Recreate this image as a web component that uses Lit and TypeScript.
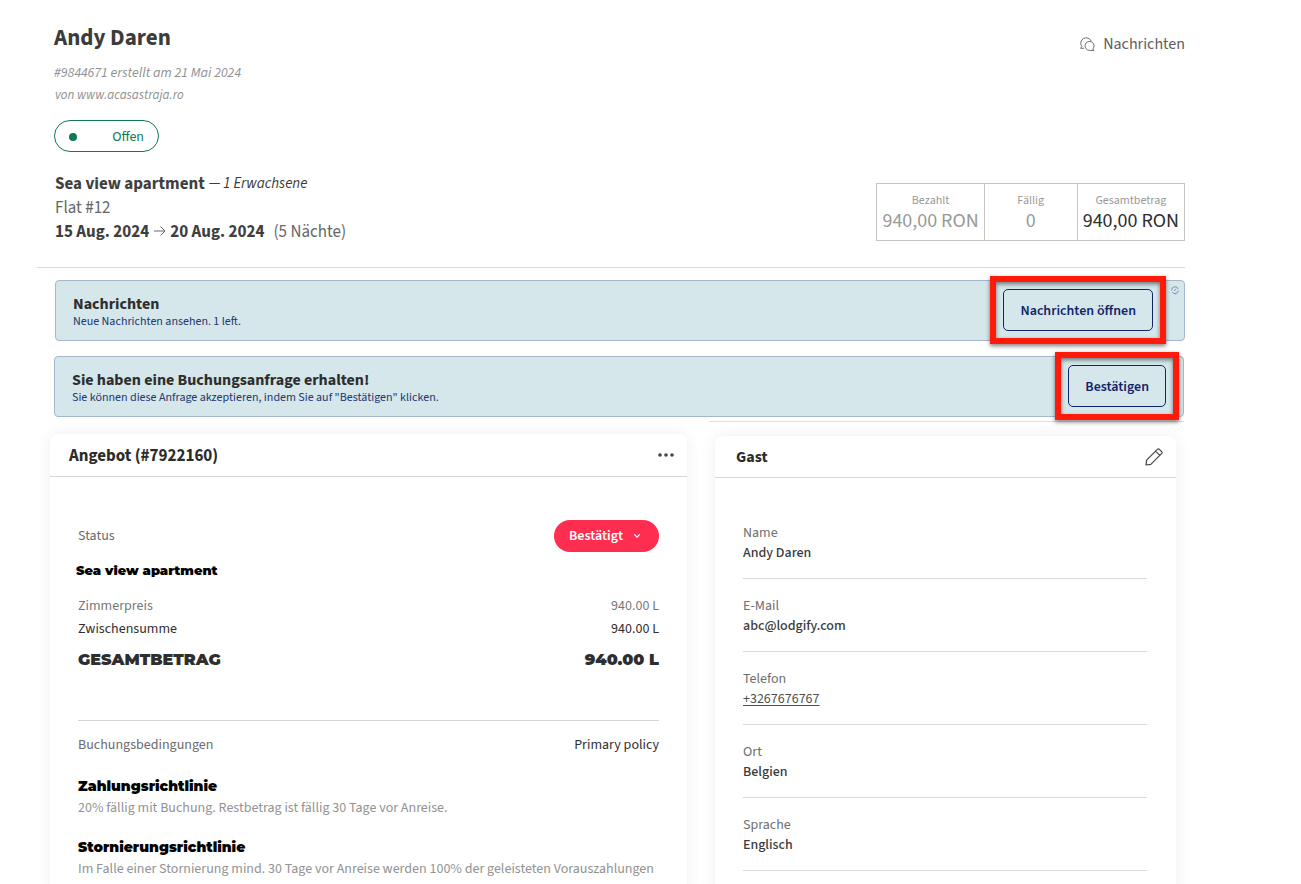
import { LitElement, html, css, svg } from "lit";
import { customElement } from "lit/decorators.js";

const chatIcon = svg`
  <path d="M0.6 11.3 L1.8 9.6 A5.5 5.5 0 1 1 11.2 4" />
  <path d="M0.6 11.3 H4" />
  <path d="M14 13.4 L12.9 11.9 A4.5 4.5 0 1 0 9.6 13.4 Z" />
`;

const guestFields = [
  { label: "Name", value: "Andy Daren" },
  { label: "E-Mail", value: "abc@lodgify.com" },
  { label: "Telefon", value: "+3267676767", href: "tel:+3267676767" },
  { label: "Ort", value: "Belgien" },
  { label: "Sprache", value: "Englisch" },
];

const totals = [
  { label: "Bezahlt", value: "940,00 RON", tone: "muted" },
  { label: "Fällig", value: "0", tone: "muted" },
  { label: "Gesamtbetrag", value: "940,00 RON", tone: "strong" },
];

@customElement("app-root")
export class AppRoot extends LitElement {
  static styles = css`
    :host {
      display: flex;
      flex-direction: column;
      box-sizing: border-box;
      min-height: 100vh;
      padding: 23px 116px 0 37px;
      overflow: hidden;
      background: #fff;
      color: #333;
      font-family: "Source Sans 3", "Source Sans Pro", "Noto Sans CJK SC", sans-serif;
      font-size: 14px;
      line-height: 20px;
    }
    * { box-sizing: border-box; }
    h1, h2, h3, p, dl, dd { margin: 0; }
    button, select { font: inherit; cursor: pointer; }
    svg { display: block; fill: none; stroke: currentColor; }

    .top {
      display: flex;
      justify-content: space-between;
      padding: 0 0 23px 17px;
      border-bottom: 1px solid #d8d8d8;
    }
    h1 { font-size: 23px; line-height: 30px; font-weight: 700; color: #3c3c3c; }
    .meta { margin-top: 9px; line-height: 22px; font-style: italic; color: #919191; }
    .source { font-size: 13px; padding-left: 1px; }
    .state {
      display: flex;
      align-items: center;
      justify-content: space-between;
      width: 105px;
      height: 32px;
      margin: 14px 0 20px;
      padding: 1px 14px 0;
      border: 1px solid #0f7a52;
      border-radius: 16px;
      color: #0f7a52;
    }
    .dot { width: 8px; height: 8px; border-radius: 50%; background: #0f7a52; }
    .stay { font-size: 17px; color: #666; padding-left: 1px; }
    .stay p { display: flex; align-items: center; gap: 4px; height: 24px; }
    .stay strong { font-weight: 700; color: #3f3f3f; }
    .stay em { font-size: 15px; color: #3a3a3a; }
    .nights { margin-left: 5px; }

    .side {
      display: flex;
      flex-direction: column;
      align-items: flex-end;
      justify-content: space-between;
      padding-top: 9px;
    }
    .messages {
      display: flex;
      align-items: center;
      gap: 8px;
      color: #5d5d5d;
      font-size: 16px;
      line-height: 24px;
      text-decoration: none;
    }
    .totals { display: flex; margin-bottom: 3px; border: 1px solid #c4c4c4; }
    .total {
      min-width: 93px;
      height: 56px;
      padding: 7px 5px 0;
      text-align: center;
      color: #999;
    }
    .total + .total { border-left: 1px solid #c4c4c4; }
    .total dt { font-size: 12px; line-height: 20px; }
    .total dd { font-size: 20px; line-height: 20px; }
    .total.strong dd { color: #2e2e2e; }

    .banner {
      position: relative;
      display: flex;
      align-items: center;
      justify-content: space-between;
      height: 61px;
      margin: 12px 0 0 18px;
      padding: 0 31px 0 17px;
      border: 1px solid #a5b7cd;
      border-radius: 4px;
      background: #d5e7ea;
    }
    .banner + .banner { margin: 15px 1px 0 17px; padding-right: 17px; }
    .note { padding-top: 2px; }
    .note h2 { font-size: 16px; line-height: 20px; color: #2e2e2e; }
    .note p { font-size: 12px; line-height: 15px; color: #24356f; }
    .banner button {
      position: relative;
      height: 42px;
      margin-bottom: 1px;
      padding: 1px 16px 0;
      border: 1px solid #10256a;
      border-radius: 5px;
      background: transparent;
      color: #10256a;
      font-weight: 600;
    }
    .banner button::after {
      content: "";
      position: absolute;
      inset: -14px;
      border: 6px solid #ff1a0a;
      filter: drop-shadow(0 2px 2px rgba(0, 0, 0, 0.5));
      pointer-events: none;
    }
    .corner { position: absolute; top: 5px; right: 5px; color: #7088a8; }

    .columns {
      flex: 1;
      display: grid;
      grid-template-columns: 637fr 461fr;
      gap: 28px;
      margin: 4px 9px 0 13px;
    }
    .column { display: flex; flex-direction: column; min-width: 0; }
    .rule { height: 1px; margin: 0 -8px 14px -6px; background: #dedede; }
    .card {
      flex: 1;
      border-radius: 8px 8px 0 0;
      background: #fff;
      box-shadow: 0 0 16px rgba(0, 0, 0, 0.07);
    }
    .offer { margin-top: 13px; }
    .head {
      display: flex;
      align-items: center;
      justify-content: space-between;
      height: 43px;
      padding: 0 13px 0 19px;
      border-bottom: 1px solid #d6d6d6;
    }
    .guest .head { height: 42px; padding: 0 13px 0 21px; }
    .head h2 { font-size: 16px; line-height: 24px; color: #2c2c2c; }
    .offer .head h2 { padding-top: 1px; font-size: 17px; }
    .icon { padding: 0; border: 0; background: none; color: #444; }
    .body { padding: 43px 28px 0; }
    .row { display: flex; align-items: center; justify-content: space-between; }
    .label { color: #6b6b6b; }
    .status { position: relative; color: #fff; }
    .status select {
      display: block;
      appearance: none;
      width: 105px;
      height: 32px;
      padding: 0 30px 0 15px;
      border: 0;
      border-radius: 16px;
      background: #ff2d4f;
      color: #fff;
      font-weight: 600;
    }
    .status svg { position: absolute; top: 12px; right: 18px; pointer-events: none; }
    h3 {
      font-family: Montserrat, Inter, sans-serif;
      font-size: 14px;
      line-height: 21px;
      font-weight: 900;
      color: #000;
    }
    .unit { margin: 8px 0 14px -2px; font-size: 13px; }
    .prices { line-height: 23px; padding-bottom: 49px; border-bottom: 1px solid #d4d4d4; }
    .price { display: flex; justify-content: space-between; color: #2e2e2e; }
    .price.light { color: #777; }
    .price.sum {
      margin-top: 7px;
      font-family: Montserrat, Inter, sans-serif;
      font-size: 16px;
      font-weight: 900;
    }
    .terms { padding: 14px 0 21px; color: #2e2e2e; }
    .policy { margin-bottom: 18px; }
    .policy p { line-height: 22px; color: #929292; }

    .fields { padding: 28px 29px 0 28px; }
    .field { padding: 17px 0 15px; border-bottom: 1px solid #d9dadc; }
    .field dt { color: #6f6f6f; }
    .field dd { font-weight: 500; color: #3a3a3a; }
    .field a { font-weight: 400; color: #4e4e4e; text-underline-offset: 2px; }
  `;

  render() {
    return html`
      <header class="top">
        <div>
          <h1>Andy Daren</h1>
          <div class="meta">
            <p>#9844671 erstellt am 21 Mai 2024</p>
            <p class="source">von www.acasastraja.ro</p>
          </div>
          <div class="state"><span class="dot"></span><span>Offen</span></div>
          <div class="stay">
            <p><strong>Sea view apartment</strong><em>— 1 Erwachsene</em></p>
            <p>Flat #12</p>
            <p>
              <strong>15 Aug. 2024</strong>
              <svg width="13" height="12" viewBox="0 0 13 12"><path d="M1 5 H12 M7.5 0.5 L12 5 L7.5 9.5" /></svg>
              <strong>20 Aug. 2024</strong>
              <span class="nights">(5 Nächte)</span>
            </p>
          </div>
        </div>
        <div class="side">
          <a class="messages" href="#messages">
            <svg width="15" height="14" viewBox="0 0 15 14" stroke-width="0.9">${chatIcon}</svg>
            Nachrichten
          </a>
          <dl class="totals">
            ${totals.map((t) => html`<div class="total ${t.tone}"><dt>${t.label}</dt><dd>${t.value}</dd></div>`)}
          </dl>
        </div>
      </header>

      <section class="banner">
        <div class="note">
          <h2>Nachrichten</h2>
          <p>Neue Nachrichten ansehen. 1 left.</p>
        </div>
        <button type="button">Nachrichten öffnen</button>
        <svg class="corner" width="8" height="9" viewBox="0 0 8 9" stroke-width="0.9">
          <path d="M0.6 4.4 A3.4 3.4 0 0 1 7.2 3 M7.4 4.6 A3.4 3.4 0 0 1 1.2 6 M3 5 L5.2 2.8 M3.6 7 L4.8 8.4" />
        </svg>
      </section>
      <section class="banner">
        <div class="note">
          <h2>Sie haben eine Buchungsanfrage erhalten!</h2>
          <p>Sie können diese Anfrage akzeptieren, indem Sie auf "Bestätigen" klicken.</p>
        </div>
        <button type="button">Bestätigen</button>
      </section>

      <main class="columns">
        <div class="column">
          <section class="card offer">
            <div class="head">
              <h2>Angebot (#7922160)</h2>
              <button class="icon" type="button" aria-label="Mehr">
                <svg width="16" height="4" viewBox="0 0 16 4">
                  <g fill="currentColor" stroke="none"><circle cx="2" cy="2" r="1.8" /><circle cx="8" cy="2" r="1.8" /><circle cx="14" cy="2" r="1.8" /></g>
                </svg>
              </button>
            </div>
            <div class="body">
              <div class="row">
                <label class="label" for="status">Status</label>
                <div class="status">
                  <select id="status"><option>Bestätigt</option></select>
                  <svg width="8" height="8" viewBox="0 0 8 8" stroke-width="1.3"><path d="M1.3 2.4 L4 5.1 L6.7 2.4" /></svg>
                </div>
              </div>
              <h3 class="unit">Sea view apartment</h3>
              <dl class="prices">
                <div class="price light"><dt>Zimmerpreis</dt><dd>940.00 L</dd></div>
                <div class="price"><dt>Zwischensumme</dt><dd>940.00 L</dd></div>
                <div class="price sum"><dt>GESAMTBETRAG</dt><dd>940.00 L</dd></div>
              </dl>
              <div class="row terms"><span class="label">Buchungsbedingungen</span><span>Primary policy</span></div>
              <div class="policy">
                <h3>Zahlungsrichtlinie</h3>
                <p>20% fällig mit Buchung. Restbetrag ist fällig 30 Tage vor Anreise.</p>
              </div>
              <div class="policy">
                <h3>Stornierungsrichtlinie</h3>
                <p>Im Falle einer Stornierung mind. 30 Tage vor Anreise werden 100% der geleisteten Vorauszahlungen</p>
              </div>
            </div>
          </section>
        </div>

        <div class="column">
          <div class="rule"></div>
          <section class="card guest">
            <div class="head">
              <h2>Gast</h2>
              <button class="icon" type="button" aria-label="Bearbeiten">
                <svg width="18" height="18" viewBox="0 0 18 18" stroke-width="1.2" stroke-linejoin="round">
                  <path d="M1 17 L1.6 12.2 L12.6 1.2 Q13.4 0.5 14.2 1.2 L16.8 3.8 Q17.5 4.6 16.8 5.4 L5.8 16.4 Z M10.6 3.2 L14.8 7.4" />
                </svg>
              </button>
            </div>
            <dl class="fields">
              ${guestFields.map(
                (f) => html`<div class="field">
                  <dt>${f.label}</dt>
                  <dd>${f.href ? html`<a href=${f.href}>${f.value}</a>` : f.value}</dd>
                </div>`,
              )}
            </dl>
          </section>
        </div>
      </main>
    `;
  }
}
